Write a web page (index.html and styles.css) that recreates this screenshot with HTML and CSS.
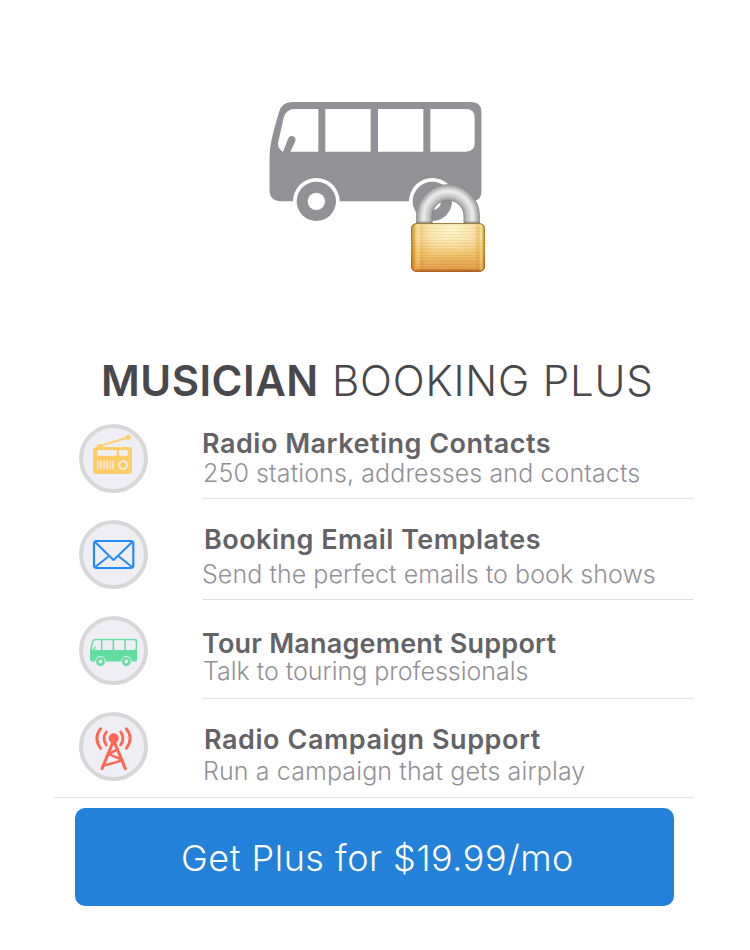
FILE: index.html
```
<!DOCTYPE html>
<html lang="en">
<head>
<meta charset="utf-8">
<title>Musician Booking Plus</title>
<link rel="stylesheet" href="styles.css">
</head>
<body>
<svg class="defs" width="0" height="0" aria-hidden="true">
  <symbol id="bus" viewBox="28 36 637 357" preserveAspectRatio="none">
    <path class="ink" d="M96 36H632Q665 36 665 70V300Q665 334 632 334H64Q28 334 28 298V215C28 170 37 138 45 108L57 66Q66 36 96 36Z"/>
    <g class="gap">
      <path d="M105 57H175V185H91L106 154Q109 143 99 139Q88 136 84 147L69 185Q54 178 54 160L71 83Q78 57 105 57Z"/>
      <path d="M196 57H332V185H196ZM354 57H490V185H354ZM511 57H618Q644 57 644 83V159Q644 185 618 185H511Z"/>
      <circle cx="169" cy="334" r="70"/><circle cx="517" cy="334" r="70"/>
    </g>
    <circle class="ink" cx="169" cy="334" r="59"/><circle class="ink" cx="517" cy="334" r="59"/>
    <circle class="gap" cx="169" cy="334" r="26"/><circle class="gap" cx="517" cy="334" r="26"/>
  </symbol>
</svg>
<main class="page">
  <svg class="hero" viewBox="0 0 720 570" role="img" aria-label="Locked tour bus">
    <defs>
      <linearGradient id="gold" x1="0" y1="0" x2="0" y2="1">
        <stop offset="0" stop-color="#f3d88a"/><stop offset=".3" stop-color="#f4d691"/><stop offset=".65" stop-color="#edbb62"/><stop offset="1" stop-color="#dc8f3c"/>
      </linearGradient>
      <linearGradient id="edge" x1="0" y1="0" x2="1" y2="0">
        <stop offset="0" stop-color="#a85d00" stop-opacity=".6"/><stop offset=".04" stop-color="#d38a10" stop-opacity=".5"/><stop offset=".09" stop-color="#fff0b0" stop-opacity=".3"/><stop offset=".14" stop-color="#d99a20" stop-opacity=".2"/><stop offset=".3" stop-color="#fff" stop-opacity=".05"/><stop offset=".8" stop-color="#fff" stop-opacity="0"/><stop offset=".91" stop-color="#d38a10" stop-opacity=".3"/><stop offset=".95" stop-color="#ffe58a" stop-opacity=".4"/><stop offset="1" stop-color="#9b5a00" stop-opacity=".65"/>
      </linearGradient>
      <radialGradient id="shine" cx=".55" cy=".12" r=".6">
        <stop offset="0" stop-color="#fffbe0" stop-opacity=".85"/><stop offset="1" stop-color="#fff3c0" stop-opacity="0"/>
      </radialGradient>
      <linearGradient id="rim" x1="0" y1="0" x2="0" y2="1">
        <stop offset="0" stop-color="#8f6c20"/><stop offset=".5" stop-color="#c4820f"/><stop offset="1" stop-color="#9b4f18"/>
      </linearGradient>
      <pattern id="brush" width="8" height="9" patternUnits="userSpaceOnUse">
        <path d="M0 1H8" stroke="#bd7000" stroke-opacity=".17" stroke-width="2"/><path d="M0 5H8" stroke="#fff6c8" stroke-opacity=".18" stroke-width="2"/>
      </pattern>
    </defs>
    <use href="#bus" x="28" y="36" width="637" height="357"/>
    <g fill="none">
      <path d="M493 401V378A71 71 0 0 1 635 378V401" stroke="#858585" stroke-width="49"/>
      <path d="M493 399V378A71 71 0 0 1 635 378V399" stroke="#a9a9a9" stroke-width="44"/>
      <path d="M493 399V378A71 71 0 0 1 635 378V399" stroke="#c2c2c2" stroke-width="33"/>
      <path d="M492 399V378A72 72 0 0 1 636 378V399" stroke="#d6d6d6" stroke-width="21"/>
      <path d="M491 392V377A73 73 0 0 1 637 377V392" stroke="#e8e8e8" stroke-width="9"/>
      <path d="M470 397H517M612 397H659" stroke="#666" stroke-opacity=".45" stroke-width="5"/>
    </g>
    <rect x="454" y="400" width="220" height="145" rx="15" fill="url(#gold)"/>
    <rect x="454" y="400" width="220" height="145" rx="15" fill="url(#shine)"/>
    <rect x="454" y="400" width="220" height="145" rx="15" fill="url(#brush)"/>
    <rect x="454" y="400" width="220" height="145" rx="15" fill="url(#edge)"/>
    <rect x="455" y="401" width="218" height="143" rx="14" fill="none" stroke="url(#rim)" stroke-width="3"/>
    <path d="M468 405H660" stroke="#fff5bd" stroke-opacity=".7" stroke-width="3"/>
    <path d="M467 540H662" stroke="#b85b20" stroke-opacity=".65" stroke-width="5"/>
  </svg>

  <h1 class="title"><b>MUSICIAN</b><span>BOOKING PLUS</span></h1>

  <section class="features">
    <div class="icons">
      <svg class="icon radio" viewBox="27 27 207 207">
        <circle class="disc" cx="130.500" cy="130.500" r="97.500"/>
        <path class="line" d="M84 95L174 67" stroke-width="5"/>
        <circle class="ink" cx="175" cy="67" r="7.500"/>
        <path class="ink" d="M80 97Q82 87 91 87Q96 88 98 96H177Q186 96 186 105V168Q186 177 177 177H78Q69 177 69 168V105Q69 97 80 97Z"/>
        <path class="gap" d="M82 105H140V122H82ZM147 105H173V122H147ZM82 137H86V163H82ZM91 137H95V163H91ZM100 137H104V163H100ZM109 137H113V163H109ZM118 137H122V163H118ZM127 137H131V163H127Z"/>
        <circle class="gap" cx="159" cy="150" r="14.500"/><circle class="ink" cx="159" cy="150" r="9"/>
      </svg>
      <svg class="icon mail" viewBox="27 30 207 207">
        <circle class="disc" cx="130.500" cy="133.500" r="97.500"/>
        <rect class="line" x="72" y="93" width="118" height="81" rx="8" stroke-width="6.500"/>
        <path class="line" d="M75 96L130.500 150L187 96M76 171L117 138M186 171L145 138" stroke-width="6"/>
      </svg>
      <svg class="icon tour" viewBox="27 33 207 207">
        <circle class="disc" cx="130.500" cy="136.500" r="97.500"/>
        <use href="#bus" x="60" y="101" width="142" height="82"/>
      </svg>
      <svg class="icon tower" viewBox="27 30 207 207">
        <circle class="disc" cx="130.500" cy="133.500" r="97.500"/>
        <circle class="ink" cx="131" cy="109" r="15"/>
        <path class="line" d="M131 115L96 200M131 115L166 200" stroke-width="9"/>
        <path class="line" d="M119 154L137 145M115 156L148 170M105 190L154 176" stroke-width="7"/>
        <path class="line" d="M109 90Q95 109 109 129M152 90Q166 109 152 129M92 80Q69 109 92 139M169 80Q192 109 169 139" stroke-width="8.500"/>
      </svg>
    </div>
    <div class="list">
      <article class="feature f1"><h2>Radio Marketing Contacts</h2><p>250 stations, addresses and contacts</p></article>
      <article class="feature f2"><h2>Booking Email Templates</h2><p>Send the perfect emails to book shows</p></article>
      <article class="feature f3"><h2>Tour Management Support</h2><p>Talk to touring professionals</p></article>
      <article class="feature f4"><h2>Radio Campaign Support</h2><p>Run a campaign that gets airplay</p></article>
    </div>
  </section>
  <button class="buy" type="button">Get Plus for $19.99/mo</button>
</main>
</body>
</html>
```
FILE: styles.css
```
* { box-sizing: border-box; }
body { margin: 0; background: #fff; font-family: Inter, "Liberation Sans", sans-serif; }
h1, h2, p { margin: 0; white-space: nowrap; }
.defs { display: block; height: 0; }
.page { width: 750px; height: 950px; overflow: hidden; --gap: #fff; }
.ink { fill: currentColor; }
.gap { fill: var(--gap); }
.line { fill: none; stroke: currentColor; stroke-linecap: round; stroke-linejoin: round; }
.hero { display: block; width: 240px; height: 190px; margin: 90px 0 0 260px; color: #929196; }
.title { display: flex; margin: 76px 0 0 101px; height: 50px; font-size: 42px; line-height: 50px; color: #48484d; }
.title b { width: 231px; font-weight: 600; letter-spacing: .5px; }
.title span { font-weight: 300; letter-spacing: .82px; }
.features { display: flex; width: 640px; margin: 18px 0 0 54px; padding-left: 25px; border-bottom: 1px solid #e1e1e2; }
.icons { display: flex; flex-direction: column; gap: 27px; width: 123px; height: 373px; }
.icon { display: block; width: 69px; height: 69px; --gap: #efeef4; }
.disc { fill: #efeef4; stroke: #d7d7d7; stroke-width: 12; }
.radio { color: #ffcc66; }
.mail { color: #228cff; }
.tour { color: #63dc9f; }
.tower { color: #ff6650; }
.list { flex: 1; }
.feature { border-bottom: 1px solid #e1e1e2; }
.feature:last-child { border-bottom: 0; }
.feature h2 { font-size: 27px; line-height: 28px; font-weight: 600; color: #636367; }
.feature p { font-size: 25px; line-height: 26px; font-weight: 300; color: #929197; }
.f1 { height: 75px; padding-top: 6px; }
.f2 { height: 101px; padding-top: 27px; }
.f3 { height: 99px; padding-top: 30px; }
.f4 { height: 98px; padding-top: 27px; }
.f1 h2 { letter-spacing: .5px; }
.f2 h2 { padding-left: 2px; letter-spacing: .48px; }
.f3 h2 { letter-spacing: .2px; }
.f4 h2 { padding-left: 2px; letter-spacing: .55px; }
.f1 p { margin-top: 2px; padding-left: 1px; letter-spacing: .11px; }
.f2 p { margin-top: 7px; letter-spacing: .06px; }
.f3 p { padding-left: 1px; letter-spacing: -.03px; }
.f4 p { margin-top: 4px; padding-left: 1px; letter-spacing: .12px; }
.buy { display: block; width: 599px; height: 98px; margin: 10px 0 0 75px; padding: 3px 0 0 6px; border: 0; border-radius: 10px; background: #2481d9; color: #fff; font: 300 36px/95px Inter, "Liberation Sans", sans-serif; letter-spacing: .52px; }
```
